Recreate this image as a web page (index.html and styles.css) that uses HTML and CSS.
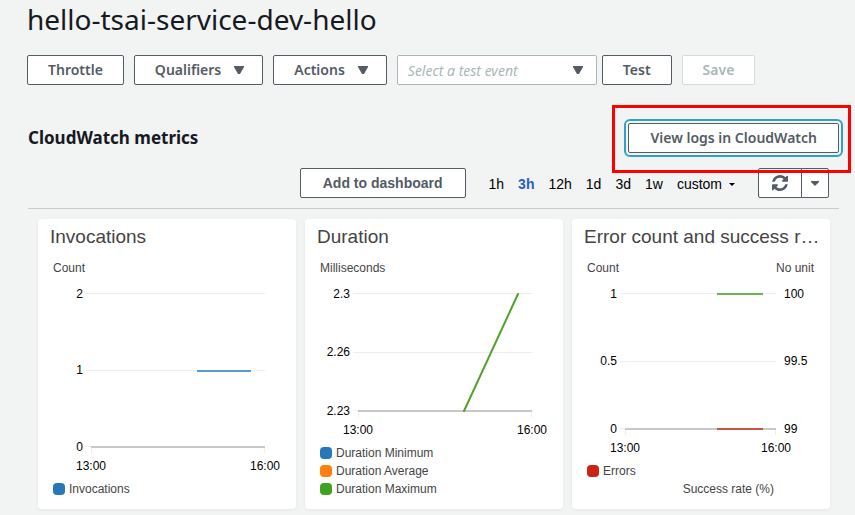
FILE: index.html
```
<!DOCTYPE html>
<html lang="en">
<head>
<meta charset="utf-8">
<title>hello-tsai-service-dev-hello</title>
<link rel="stylesheet" href="styles.css">
</head>
<body>
<main class="page">
  <h1 class="title">hello-tsai-service-dev-hello</h1>

  <div class="toolbar">
    <button class="btn" type="button">Throttle</button>
    <button class="btn" type="button">Qualifiers <svg class="arrow" viewBox="0 0 10 8" aria-hidden="true"><path d="M0 0h10v1L6 8H4L0 1z"/></svg></button>
    <button class="btn" type="button">Actions <svg class="arrow" viewBox="0 0 10 8" aria-hidden="true"><path d="M0 0h10v1L6 8H4L0 1z"/></svg></button>
    <div class="run-group">
      <div class="select-wrap">
        <select class="select" aria-label="Test event"><option>Select a test event</option></select>
        <svg class="arrow select-arrow" viewBox="0 0 10 8" aria-hidden="true"><path d="M0 0h10v1L6 8H4L0 1z"/></svg>
      </div>
      <button class="btn" type="button">Test</button>
    </div>
    <button class="btn" type="button" disabled>Save</button>
  </div>

  <section class="metrics">
    <div class="metrics-head">
      <h2 class="subtitle">CloudWatch metrics</h2>
      <div class="callout">
        <button class="btn btn-focus" type="button">View logs in CloudWatch</button>
      </div>
    </div>

    <div class="controls">
      <button class="btn btn-plain" type="button">Add to dashboard</button>
      <div class="ranges">
        <button class="range" type="button">1h</button>
        <button class="range active" type="button">3h</button>
        <button class="range" type="button">12h</button>
        <button class="range" type="button">1d</button>
        <button class="range" type="button">3d</button>
        <button class="range" type="button">1w</button>
        <button class="range" type="button">custom <svg class="caret" viewBox="0 0 6 3" aria-hidden="true"><path d="M0 0h6L3 3z"/></svg></button>
      </div>
      <div class="split">
        <button class="btn split-main" type="button" aria-label="Refresh">
          <svg class="refresh" viewBox="0 0 1536 1536" aria-hidden="true"><path d="M1511 928q0 5-1 7-64 268-268 434.500T764 1536q-146 0-282.500-55T238 1324l-129 129q-19 19-45 19t-45-19-19-45V960q0-26 19-45t45-19h448q26 0 45 19t19 45-19 45l-137 137q71 66 161 102t187 36q134 0 250-65t186-179q11-17 53-117 8-23 30-23h192q13 0 22.500 9.500t9.500 22.500zm25-800v448q0 26-19 45t-45 19h-448q-26 0-45-19t-19-45 19-45l138-138Q969 256 768 256q-134 0-250 65T332 500q-11 17-53 117-8 23-30 23H50q-13 0-22.500-9.500T18 608v-7q65-268 270-434.500T768 0q146 0 284 55.500T1297 212l130-129q19-19 45-19t45 19 19 45z"/></svg>
        </button>
        <button class="btn split-more" type="button" aria-label="Refresh options">
          <svg class="more" viewBox="0 0 8 5" aria-hidden="true"><path d="M0 0h8v1L4 5 0 1z"/></svg>
        </button>
      </div>
    </div>

    <div class="cards">
      <article class="card">
        <h3 class="card-title">Invocations</h3>
        <div class="units"><span>Count</span></div>
        <svg class="plot" viewBox="0 0 258 200" role="img" aria-label="Invocations">
          <path class="grid" d="M48 13h179M48 90h179M48 166h5v7M226 166v7"/>
          <path class="axis" d="M53 167h174"/>
          <path class="series blue" d="M159 91h54"/>
          <g class="end"><text x="45" y="18">2</text><text x="45" y="94">1</text><text x="45" y="171">0</text></g>
          <g class="mid"><text x="53" y="190">13:00</text><text x="227" y="190">16:00</text></g>
        </svg>
        <ul class="legend"><li><i class="swatch blue"></i>Invocations</li></ul>
      </article>

      <article class="card">
        <h3 class="card-title">Duration</h3>
        <div class="units"><span>Milliseconds</span></div>
        <svg class="plot" viewBox="0 0 258 164" role="img" aria-label="Duration">
          <path class="grid" d="M48 13h179M48 72h179M48 130h5v7M226 130v7"/>
          <path class="axis" d="M53 131h174"/>
          <path class="series green slope" d="M159 131L213 14"/>
          <g class="end"><text x="45" y="18">2.3</text><text x="45" y="76">2.26</text><text x="45" y="135">2.23</text></g>
          <g class="mid"><text x="53" y="154">13:00</text><text x="227" y="154">16:00</text></g>
        </svg>
        <ul class="legend">
          <li><i class="swatch blue"></i>Duration Minimum</li>
          <li><i class="swatch orange"></i>Duration Average</li>
          <li><i class="swatch green"></i>Duration Maximum</li>
        </ul>
      </article>

      <article class="card">
        <h3 class="card-title">Error count and success r…</h3>
        <div class="units"><span>Count</span><span>No unit</span></div>
        <svg class="plot" viewBox="0 0 258 164" role="img" aria-label="Error count and success rate">
          <path class="grid" d="M48 13h156M48 81h156M48 148h5v7M203 148v7"/>
          <path class="axis" d="M53 149h151"/>
          <path class="series green" d="M145 14h46"/>
          <path class="series red" d="M145 149h46"/>
          <g class="end"><text x="45" y="18">1</text><text x="45" y="85">0.5</text><text x="45" y="153">0</text></g>
          <g><text x="212" y="18">100</text><text x="212" y="85">99.5</text><text x="212" y="153">99</text></g>
          <g class="mid"><text x="53" y="172">13:00</text><text x="204" y="172">16:00</text></g>
        </svg>
        <ul class="legend">
          <li><i class="swatch red"></i>Errors</li>
          <li class="legend-right">Success rate (%)</li>
        </ul>
      </article>
    </div>
  </section>
</main>
</body>
</html>
```
FILE: styles.css
```
* { box-sizing: border-box; }

body {
  margin: 0;
  background: #f2f3f3;
  color: #16191f;
  font-family: "Noto Sans", "Open Sans", sans-serif;
}

button, select { font: inherit; }

.page { padding: 0 16px 5px 27px; }

.title {
  margin: 0;
  font-size: 28px;
  line-height: 38px;
  font-weight: 400;
}

.toolbar {
  display: flex;
  gap: 10px;
  margin-top: 17px;
}

.run-group { display: flex; gap: 5px; }

.btn {
  display: inline-flex;
  align-items: center;
  justify-content: center;
  gap: 13px;
  height: 30px;
  padding: 0 20px;
  border: 1px solid #545b64;
  border-radius: 2px;
  background: #fff;
  color: #545b64;
  font-size: 14px;
  line-height: 20px;
  font-weight: 600;
  white-space: nowrap;
}

.btn:disabled { border-color: #d5dbdb; color: #aab7b8; }

.arrow { width: 10px; height: 8px; fill: #545b64; }

.toolbar .btn .arrow { margin-right: -2px; }

.select-wrap { position: relative; width: 200px; }

.select {
  appearance: none;
  width: 100%;
  height: 30px;
  padding: 0 30px 0 10px;
  border: 1px solid #aab7b8;
  border-radius: 2px;
  background: #fff;
  color: #aab7b8;
  font-size: 14px;
  font-style: italic;
}

.select-arrow {
  position: absolute;
  top: 11px;
  right: 14px;
  pointer-events: none;
}

.metrics { margin-left: 1px; }

.metrics-head {
  display: flex;
  justify-content: space-between;
  align-items: center;
  margin-top: 38px;
}

.subtitle {
  margin: 0;
  font-size: 17px;
  line-height: 24px;
  font-weight: 700;
}

.callout { position: relative; display: flex; }

.callout::after {
  content: "";
  position: absolute;
  inset: -18px -12px -20px -16px;
  border: 3px solid #f00;
  pointer-events: none;
  z-index: 1;
}

.btn-focus { padding: 0 21px; outline: 2px solid #2ea1cc; outline-offset: 2px; }

.controls {
  display: flex;
  justify-content: flex-end;
  align-items: center;
  gap: 23px;
  margin-top: 15px;
  padding: 0 10px 10px 0;
  border-bottom: 1px solid #c8cccc;
  font-family: "Liberation Sans", Arial, sans-serif;
}

.btn-plain { padding: 0 22px; }

.ranges { display: flex; gap: 14px; padding-top: 2px; }

.range {
  display: flex;
  align-items: center;
  gap: 7px;
  padding: 0;
  border: 0;
  background: none;
  color: #000;
  font-size: 14px;
  line-height: 20px;
}

.range.active { color: #2a5fc0; font-weight: 700; }

.caret { width: 6px; height: 3px; }

.split { display: flex; }

.split-main { width: 44px; padding: 0; border-radius: 2px 0 0 2px; }

.split-more { width: 28px; margin-left: -1px; padding: 0; border-radius: 0 2px 2px 0; }

.refresh { width: 16px; height: 16px; fill: #545b64; }

.more { width: 8px; height: 5px; fill: #545b64; }

.cards {
  display: grid;
  grid-template-columns: repeat(3, minmax(0, 1fr));
  gap: 9px;
  margin: 10px 9px 0 10px;
  font-family: "Liberation Sans", Arial, sans-serif;
}

.card {
  display: flex;
  flex-direction: column;
  padding: 6px 0 11px;
  border-radius: 4px;
  background: #fff;
  box-shadow: 0 1px 3px #e6e8e8;
  color: #444;
  font-size: 12px;
  line-height: 18px;
}

.card-title {
  margin: 0 6px 0 12px;
  overflow: hidden;
  font-size: 19px;
  line-height: 24px;
  font-weight: 500;
  text-overflow: ellipsis;
  white-space: nowrap;
}

.units {
  display: flex;
  justify-content: space-between;
  margin: 10px 16px 3px 15px;
}

.plot { display: block; width: 100%; overflow: visible; }

.plot text { fill: #000; font-size: 12px; }

.end { text-anchor: end; }

.mid { text-anchor: middle; }

.grid { fill: none; stroke: #eee; shape-rendering: crispEdges; }

.axis { stroke: #c8c8c8; stroke-width: 2px; }

.series { stroke-width: 2px; }

.slope { stroke-linecap: round; }

.series.blue { stroke: #5a9bcb; }

.series.green { stroke: #6ab552; }

.series.slope { stroke: #54a02c; }

.series.red { stroke: #cf5044; }

.legend {
  margin: auto 15px 0;
  padding: 0;
  list-style: none;
}

.legend li { display: flex; align-items: center; gap: 4px; }

.legend .legend-right { justify-content: flex-end; margin-right: 41px; }

.swatch { width: 12px; height: 12px; border-radius: 4px; }

.swatch.blue { background: #2878b8; }

.swatch.orange { background: #ff7f0e; }

.swatch.green { background: #3fa31f; }

.swatch.red { background: #cc2414; }
```
